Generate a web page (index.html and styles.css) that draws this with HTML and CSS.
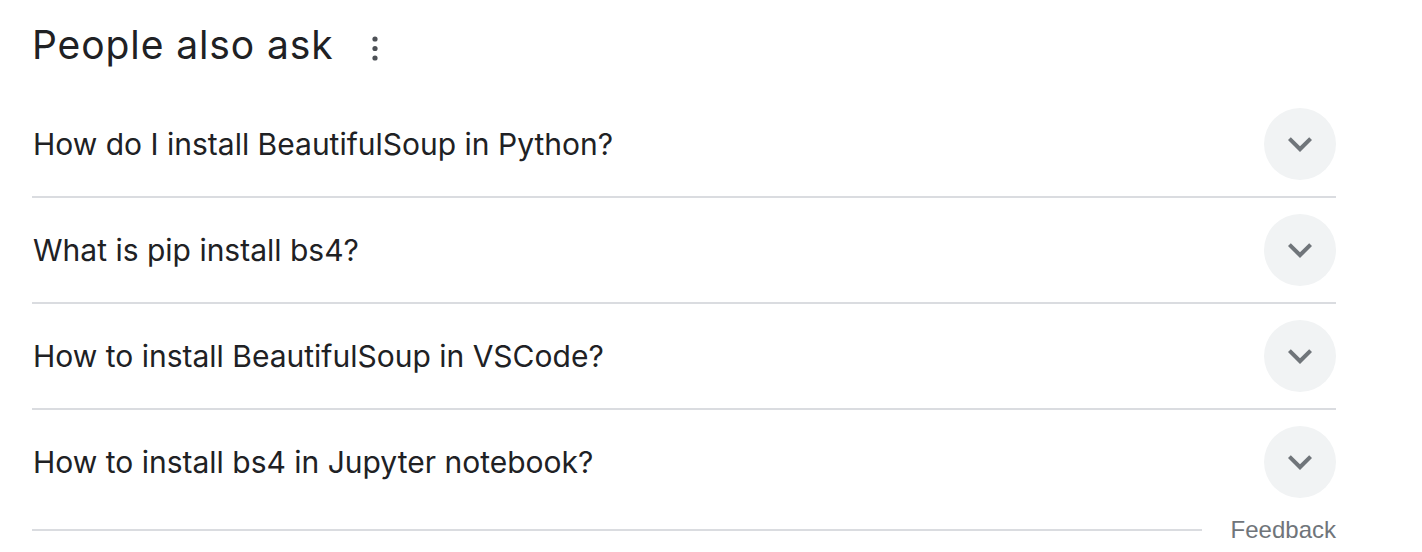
FILE: index.html
```html
<!DOCTYPE html>
<html>
<head>
<meta charset="utf-8">
<link rel="stylesheet" href="styles.css">
</head>
<body>
<div class="paa">
  <div class="paa-head">
    <h2 class="paa-title">People also ask</h2>
    <span class="paa-more">
      <svg width="8" height="28" viewBox="0 0 8 28"><circle cx="4" cy="5" r="2.6"/><circle cx="4" cy="14.5" r="2.6"/><circle cx="4" cy="24" r="2.6"/></svg>
    </span>
  </div>
  <div class="paa-list">
    <div class="paa-row"><span class="paa-q">How do I install BeautifulSoup in Python?</span><span class="paa-btn"><svg width="48" height="48" viewBox="0 0 24 24"><path d="M16.59 8.59L12 13.17 7.41 8.59 6 10l6 6 6-6z"/></svg></span></div>
    <div class="paa-row"><span class="paa-q">What is pip install bs4?</span><span class="paa-btn"><svg width="48" height="48" viewBox="0 0 24 24"><path d="M16.59 8.59L12 13.17 7.41 8.59 6 10l6 6 6-6z"/></svg></span></div>
    <div class="paa-row"><span class="paa-q">How to install BeautifulSoup in VSCode?</span><span class="paa-btn"><svg width="48" height="48" viewBox="0 0 24 24"><path d="M16.59 8.59L12 13.17 7.41 8.59 6 10l6 6 6-6z"/></svg></span></div>
    <div class="paa-row paa-last"><span class="paa-q">How to install bs4 in Jupyter notebook?</span><span class="paa-btn"><svg width="48" height="48" viewBox="0 0 24 24"><path d="M16.59 8.59L12 13.17 7.41 8.59 6 10l6 6 6-6z"/></svg></span></div>
  </div>
  <div class="paa-foot">
    <div class="paa-line"></div>
    <span class="paa-feedback">Feedback</span>
  </div>
</div>
</body>
</html>
```
FILE: styles.css
```css
html, body {
  margin: 0;
  padding: 0;
  background: #fff;
}
body {
  font-family: Inter, Roboto, Arial, sans-serif;
  color: #202124;
}
.paa {
  width: 1304px;
  padding-left: 32px;
}
.paa-head {
  height: 92px;
  display: flex;
  align-items: flex-start;
}
.paa-title {
  margin: 0;
  padding-top: 21px;
  font-family: Inter, Roboto, Arial, sans-serif;
  font-weight: 400;
  font-size: 39px;
  letter-spacing: 0.9px;
  line-height: 48px;
  color: #202124;
}
.paa-more {
  margin-left: 37px;
  padding-top: 34px;
  display: block;
}
.paa-more svg {
  display: block;
  fill: #4d5156;
}
.paa-row {
  height: 104px;
  display: flex;
  align-items: center;
  justify-content: space-between;
  border-bottom: 2px solid #dadce0;
}
.paa-last {
  border-bottom: none;
}
.paa-q {
  font-family: Inter, Roboto, Arial, sans-serif;
  font-size: 30px;
  line-height: 40px;
  padding-left: 1px;
  color: #202124;
}
.paa-btn {
  width: 72px;
  height: 72px;
  border-radius: 50%;
  background: #f1f3f4;
  display: flex;
  align-items: center;
  justify-content: center;
}
.paa-btn svg {
  display: block;
  fill: #70757a;
}
.paa-foot {
  display: flex;
  align-items: center;
  height: 28px;
  margin-top: 2px;
}
.paa-line {
  flex: 1;
  height: 2px;
  background: #dadce0;
  margin-right: 29px;
}
.paa-feedback {
  font-family: "Liberation Sans", Arial, sans-serif;
  font-size: 24px;
  color: #70757a;
  line-height: 28px;
}
```
